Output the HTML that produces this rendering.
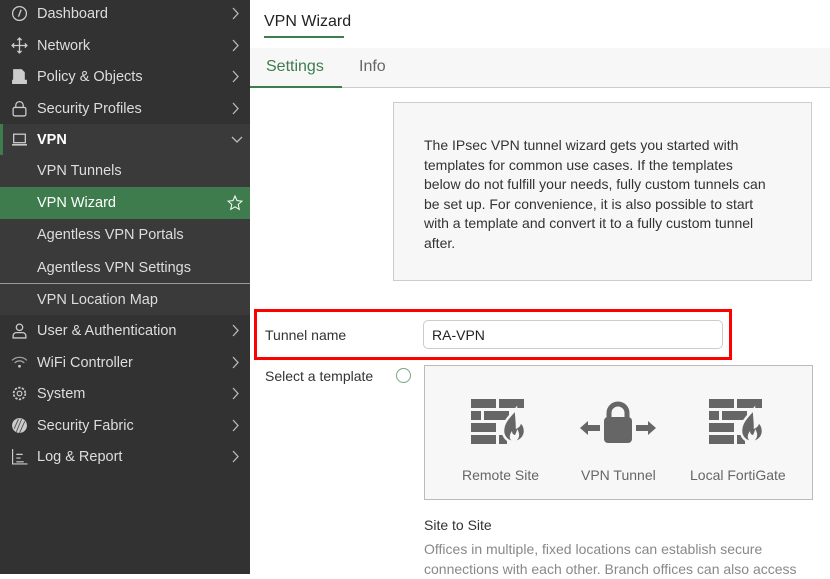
<!DOCTYPE html>
<html><head><style>
*{box-sizing:border-box;margin:0;padding:0}
body{width:830px;height:574px;overflow:hidden;font-family:"Liberation Sans",sans-serif;background:#fff;position:relative}
#sb{position:absolute;left:0;top:0;width:250px;height:574px;background:#323232;color:#ddd;font-size:14.5px}
.it{position:absolute;left:0;width:250px;height:31px;line-height:33px}
.it .ic{position:absolute;left:11px;top:7px;width:17px;height:17px}
.it .t{position:absolute;left:37px}
.it .ch{position:absolute;left:231px;top:0;color:#bbb;font-size:13px}
.sub{background:#3a3a3a}
.main{position:absolute}
</style></head><body>
<div id="sb">
<div class="it" style="top:-2px"><svg class="ic" viewBox="0 0 16 16"><circle cx="8" cy="8" r="6.5" fill="none" stroke="#ccc" stroke-width="1.2"/><path d="M7 11L9.5 4.5" stroke="#ccc" stroke-width="1.3"/></svg><span class="t">Dashboard</span><svg class="ch" width="8" height="31" viewBox="0 0 8 31"><path d="M2 10l5 5.5-5 5.5" fill="none" stroke="#bbb" stroke-width="1.3"/></svg></div>
<div class="it" style="top:30px"><svg class="ic" viewBox="0 0 16 16"><path d="M8 1v14M1 8h14M6 3l2-2 2 2M6 13l2 2 2-2M3 6L1 8l2 2M13 6l2 2-2 2" fill="none" stroke="#ccc" stroke-width="1.2"/></svg><span class="t">Network</span><svg class="ch" width="8" height="31" viewBox="0 0 8 31"><path d="M2 10l5 5.5-5 5.5" fill="none" stroke="#bbb" stroke-width="1.3"/></svg></div>
<div class="it" style="top:61px"><svg class="ic" viewBox="0 0 16 16"><path d="M2 1h8l3 3v7H2zM1 11h14v4H1z" fill="#ccc"/></svg><span class="t">Policy &amp; Objects</span><svg class="ch" width="8" height="31" viewBox="0 0 8 31"><path d="M2 10l5 5.5-5 5.5" fill="none" stroke="#bbb" stroke-width="1.3"/></svg></div>
<div class="it" style="top:93px"><svg class="ic" viewBox="0 0 16 16"><rect x="2" y="7" width="12" height="8" rx="1.5" fill="none" stroke="#ccc" stroke-width="1.2"/><path d="M4.5 7V5a3.5 3.5 0 017 0v2" fill="none" stroke="#ccc" stroke-width="1.2"/></svg><span class="t">Security Profiles</span><svg class="ch" width="8" height="31" viewBox="0 0 8 31"><path d="M2 10l5 5.5-5 5.5" fill="none" stroke="#bbb" stroke-width="1.3"/></svg></div>
<div class="it sub" style="top:124px;height:31px"><div style="position:absolute;left:0;top:0;width:3px;height:31px;background:#3d7c4c"></div><svg class="ic" viewBox="0 0 16 16"><rect x="2.5" y="3" width="11" height="8" fill="none" stroke="#ccc" stroke-width="1.2"/><path d="M1 13h14" stroke="#ccc" stroke-width="1.5"/></svg><span class="t" style="font-weight:bold;color:#fff">VPN</span><svg class="ch" width="12" height="31" viewBox="0 0 12 31"><path d="M1 13l5 5 5-5" fill="none" stroke="#bbb" stroke-width="1.3"/></svg></div>
<div class="it sub" style="top:155px;height:32px"><span class="t">VPN Tunnels</span></div>
<div class="it" style="top:187px;height:32px;background:#3e7c4d;color:#fff"><span class="t">VPN Wizard</span><svg style="position:absolute;left:227px;top:8px" width="16" height="16" viewBox="0 0 16 16"><path d="M8 1l2 4.6 5 .5-3.8 3.3 1.1 5L8 11.8 3.7 14.4l1.1-5L1 6.1l5-.5z" fill="none" stroke="#fff" stroke-width="1"/></svg></div>
<div class="it sub" style="top:219px;height:33px"><span class="t">Agentless VPN Portals</span></div>
<div class="it sub" style="top:252px;height:31px"><span class="t">Agentless VPN Settings</span></div>
<div style="position:absolute;top:283px;left:0;width:250px;height:1px;background:#999"></div>
<div class="it sub" style="top:284px;height:31px"><span class="t">VPN Location Map</span></div>
<div class="it" style="top:315px"><svg class="ic" viewBox="0 0 16 16"><circle cx="8" cy="5" r="3" fill="none" stroke="#ccc" stroke-width="1.2"/><path d="M2 15v-2a3 3 0 013-3h6a3 3 0 013 3v2z" fill="none" stroke="#ccc" stroke-width="1.2"/></svg><span class="t">User &amp; Authentication</span><svg class="ch" width="8" height="31" viewBox="0 0 8 31"><path d="M2 10l5 5.5-5 5.5" fill="none" stroke="#bbb" stroke-width="1.3"/></svg></div>
<div class="it" style="top:347px"><svg class="ic" viewBox="0 0 16 16"><path d="M1 6a10 10 0 0114 0M3.5 8.5a6 6 0 019 0" fill="none" stroke="#aaa" stroke-width="1.1"/><circle cx="8" cy="11.5" r="1.3" fill="#ccc"/></svg><span class="t">WiFi Controller</span><svg class="ch" width="8" height="31" viewBox="0 0 8 31"><path d="M2 10l5 5.5-5 5.5" fill="none" stroke="#bbb" stroke-width="1.3"/></svg></div>
<div class="it" style="top:378px"><svg class="ic" viewBox="0 0 16 16"><circle cx="8" cy="8" r="5.5" fill="none" stroke="#ccc" stroke-width="1.6" stroke-dasharray="2.2 1.3"/><circle cx="8" cy="8" r="2.2" fill="none" stroke="#ccc" stroke-width="1.1"/></svg><span class="t">System</span><svg class="ch" width="8" height="31" viewBox="0 0 8 31"><path d="M2 10l5 5.5-5 5.5" fill="none" stroke="#bbb" stroke-width="1.3"/></svg></div>
<div class="it" style="top:410px"><svg class="ic" viewBox="0 0 16 16"><circle cx="8" cy="8" r="7" fill="#ccc"/><path d="M5 14L10 2M8 15L13 4M3 11L7 2" stroke="#555" stroke-width="0.9"/></svg><span class="t">Security Fabric</span><svg class="ch" width="8" height="31" viewBox="0 0 8 31"><path d="M2 10l5 5.5-5 5.5" fill="none" stroke="#bbb" stroke-width="1.3"/></svg></div>
<div class="it" style="top:441px"><svg class="ic" viewBox="0 0 16 16"><path d="M1.5 1v14h14M5 6h6M5 9.5h4M5 13h7" fill="none" stroke="#ccc" stroke-width="1.1"/></svg><span class="t">Log &amp; Report</span><svg class="ch" width="8" height="31" viewBox="0 0 8 31"><path d="M2 10l5 5.5-5 5.5" fill="none" stroke="#bbb" stroke-width="1.3"/></svg></div>
</div>

<div class="main" style="left:264px;top:13px;font-size:16px;color:#222">VPN Wizard</div>
<div class="main" style="left:264px;top:36px;width:80px;height:2px;background:#3d7c4c"></div>
<div class="main" style="left:250px;top:48px;width:580px;height:40px;background:#f7f7f7;border-bottom:1px solid #ccc"></div>
<div class="main" style="left:266px;top:58px;font-size:16px;color:#3d7c4c">Settings</div>
<div class="main" style="left:359px;top:58px;font-size:16px;color:#666">Info</div>
<div class="main" style="left:250px;top:86px;width:92px;height:2px;background:#3d7c4c"></div>

<div class="main" style="left:393px;top:102px;width:419px;height:179px;background:#f7f7f7;border:1px solid #ccc;padding:33px 42px 30px 30px;font-size:14px;line-height:19.6px;color:#333">The IPsec VPN tunnel wizard gets you started with templates for common use cases. If the templates below do not fulfill your needs, fully custom tunnels can be set up. For convenience, it is also possible to start with a template and convert it to a fully custom tunnel after.</div>

<div class="main" style="left:254px;top:309px;width:478px;height:51px;border:3px solid #f00"></div>
<div class="main" style="left:265px;top:327px;font-size:14px;color:#333">Tunnel name</div>
<div class="main" style="left:423px;top:320px;width:300px;height:29px;border:1px solid #ccc;border-radius:5px;padding:6px 8px;font-size:14px;color:#222">RA-VPN</div>

<div class="main" style="left:265px;top:368px;font-size:14px;color:#333">Select a template</div>
<div class="main" style="left:396px;top:368px;width:15px;height:15px;border:1.3px solid #7aa585;border-radius:50%"></div>
<div class="main" style="left:424px;top:365px;width:389px;height:135px;background:#f7f7f7;border:1px solid #bbb"></div>

<svg class="main" style="left:471px;top:399px" width="60" height="48" viewBox="0 0 60 48"><g fill="#666"><rect x="0" y="0" width="25" height="9"/><rect x="28" y="0" width="25" height="9"/><rect x="0" y="12" width="10" height="9"/><rect x="13" y="12" width="25" height="9"/><rect x="0" y="24" width="25" height="9"/><rect x="0" y="36" width="25" height="9"/><rect x="28" y="36" width="8" height="9"/></g><path d="M45 10c-7 8-13 13-13 22a11 11 0 0022 0c0-5-2-7-5-10 0 3-1 5-3 6 0-7-1-12-1-18z" fill="#666" stroke="#f7f7f7" stroke-width="2.5"/><path d="M41 42c-3-2-3-6 0-10 0 3 2 4 3 4 1-2 2-4 2-6 3 4 3 9-1 12z" fill="#f7f7f7"/></svg>
<svg class="main" style="left:580px;top:401px" width="76" height="43" viewBox="0 0 76 43"><path d="M29 17v-5a9 9 0 0118 0v5" fill="none" stroke="#666" stroke-width="5"/><rect x="24" y="16" width="28" height="26" rx="4" fill="#666"/><path d="M0 27l8-7v4h12v6H8v4zM76 27l-8-7v4H56v6h12v4z" fill="#666"/></svg>
<svg class="main" style="left:709px;top:399px" width="60" height="48" viewBox="0 0 60 48"><g fill="#666"><rect x="0" y="0" width="25" height="9"/><rect x="28" y="0" width="25" height="9"/><rect x="0" y="12" width="10" height="9"/><rect x="13" y="12" width="25" height="9"/><rect x="0" y="24" width="25" height="9"/><rect x="0" y="36" width="25" height="9"/><rect x="28" y="36" width="8" height="9"/></g><path d="M45 10c-7 8-13 13-13 22a11 11 0 0022 0c0-5-2-7-5-10 0 3-1 5-3 6 0-7-1-12-1-18z" fill="#666" stroke="#f7f7f7" stroke-width="2.5"/><path d="M41 42c-3-2-3-6 0-10 0 3 2 4 3 4 1-2 2-4 2-6 3 4 3 9-1 12z" fill="#f7f7f7"/></svg>
<div class="main" style="left:462px;top:467px;font-size:14px;color:#666">Remote Site</div>
<div class="main" style="left:581px;top:467px;font-size:14px;color:#666">VPN Tunnel</div>
<div class="main" style="left:690px;top:467px;font-size:14px;color:#666">Local FortiGate</div>

<div class="main" style="left:424px;top:517px;font-size:14px;color:#333">Site to Site</div>
<div class="main" style="left:424px;top:540px;width:400px;font-size:14px;line-height:19.5px;color:#888">Offices in multiple, fixed locations can establish secure connections with each other. Branch offices can also access</div>
</body></html>
